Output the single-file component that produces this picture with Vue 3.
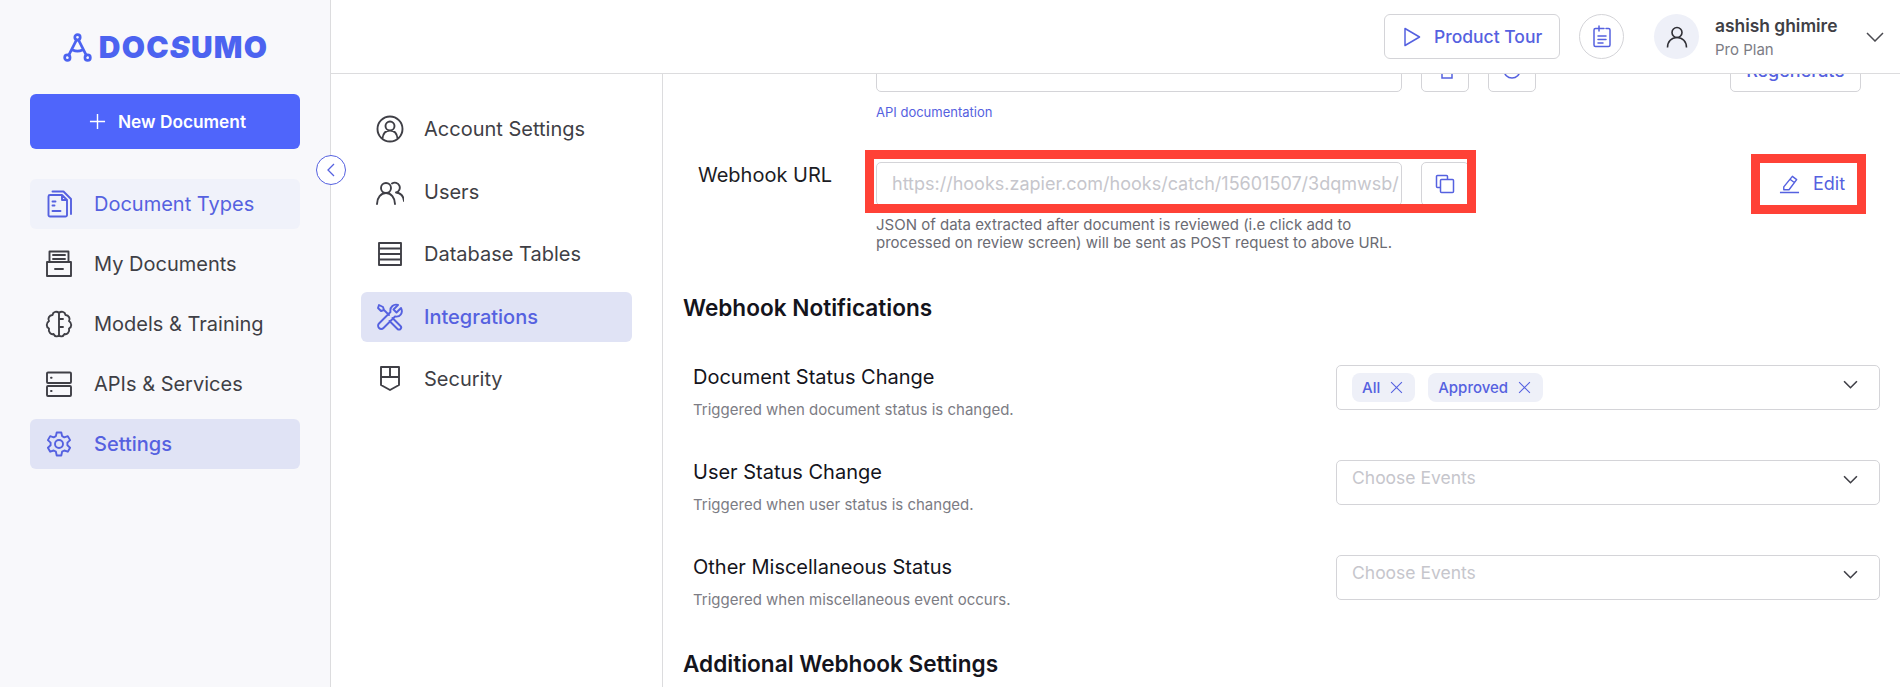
<script setup>
const mainNav = [
  { label: 'Document Types', icon: 'doc', state: 'soft' },
  { label: 'My Documents', icon: 'drawer' },
  { label: 'Models & Training', icon: 'brain' },
  { label: 'APIs & Services', icon: 'server' },
  { label: 'Settings', icon: 'gear', state: 'active' }
]
const subNav = [
  { label: 'Account Settings', icon: 'account' },
  { label: 'Users', icon: 'users' },
  { label: 'Database Tables', icon: 'table' },
  { label: 'Integrations', icon: 'tools', state: 'active' },
  { label: 'Security', icon: 'shield' }
]
const iconPaths = {
  doc: 'M5 5h12l5 5v15a1.500 1.500 0 0 1-1.500 1.500H5A1.500 1.500 0 0 1 3.500 25V6.500A1.500 1.500 0 0 1 5 5zM7.500 1.500h11l7.500 7.500v15M17 5v5h5M7.500 11.500h3M7.500 15.500h2M7.500 21h8',
  drawer: 'M4.500 12V1.500h19V12M2 12h24v14H2zM8 5h12M8 9h12M10 19h8',
  brain: 'M14 3C12 1 8 1.500 7.500 5 4 5 2.500 9 4 11c-3 2-3 6 0 7.500C3 22 6 25 8.500 24c1.500 3 4.500 3 5.500 1zM14 3c2-2 6-1.500 6.500 2 3.500 0 5 4 3.500 6 3 2 3 6 0 7.500 1 3.500-2 6.500-4.500 5.500-1.500 3-4.500 3-5.500 1M14 9h4M14 17h4',
  server: 'M3 2.500h22a1 1 0 0 1 1 1V12a1 1 0 0 1-1 1H3a1 1 0 0 1-1-1V3.500a1 1 0 0 1 1-1zM3 16h22a1 1 0 0 1 1 1v8a1 1 0 0 1-1 1H3a1 1 0 0 1-1-1v-8a1 1 0 0 1 1-1zM6 7.800h.6M6 21h.6',
  gear: 'M11.700 2.500h4.600l.8 3.600 2.200 1.200 3.500-1.200 2.300 4-2.700 2.500v2.600l2.700 2.500-2.300 4-3.500-1.200-2.200 1.200-.8 3.800h-4.600l-.8-3.800-2.200-1.200-3.500 1.200-2.300-4 2.700-2.500v-2.600l-2.700-2.500 2.300-4 3.500 1.200 2.200-1.200zM14 10a4 4 0 1 0 0 8 4 4 0 0 0 0-8z',
  account: 'M14 1.500a12.500 12.500 0 1 0 0 25 12.500 12.500 0 0 0 0-25zM14 6.500a4.500 4.500 0 1 0 0 9 4.500 4.500 0 0 0 0-9zM6.500 23.500c.5-5 3.500-8 7.500-8s7 3 7.500 8',
  users: 'M10 5a5 5 0 1 0 0 10 5 5 0 0 0 0-10zM1 26c0-6.500 4-11 9-11s9 4.500 9 11M16 5.500a5 5 0 1 1 4 9c4.500.5 7.500 4 8 8.500',
  table: 'M3 3h22v22H3zM3 8.500h22M3 14h22M3 19.500h22',
  tools: 'M25 5l-4.500 4.500-3-3L22 2c-4-1.500-8.500 2-7.500 7L3 20.500a3 3 0 0 0 4.500 4.500L19 13.500c5 1 8.500-3.500 6-8.500zM3 2L2 5l3 3 3-1-1-3zM8 7l5 5M16.500 15l8 8a2 2 0 0 1-3 3l-8-8',
  shield: 'M5 2h18v18l-9 5-9-5zM5 12h18M14 2v10'
}
</script>

<template>
  <div class="app">
    <aside class="sidebar">
      <div class="logo">
        <svg class="logo-mark" viewBox="0 0 30 30" fill="none" stroke="currentColor" stroke-width="2.800" stroke-linecap="round">
          <circle cx="15" cy="4.500" r="2.800" />
          <circle cx="4.500" cy="25.500" r="2.800" />
          <circle cx="25.500" cy="25.500" r="2.800" />
          <path d="M14 7.200L6 23M16 7.200L24 23M10 17.500c3 1.500 7 1.500 10 0" />
        </svg>
        <span class="logo-text">DOC<i>S</i>UMO</span>
      </div>
      <button class="new-doc">
        <svg viewBox="0 0 18 18" fill="none" stroke="currentColor" stroke-width="1.500"><path d="M9 1v16M1 9h16" /></svg>
        <span>New Document</span>
      </button>
      <nav class="main-nav">
        <a v-for="item in mainNav" :key="item.label" class="nav-item" :class="item.state">
          <svg viewBox="0 0 28 28" fill="none" stroke="currentColor" stroke-width="1.900" stroke-linejoin="round" stroke-linecap="round"><path :d="iconPaths[item.icon]" /></svg>
          <span>{{ item.label }}</span>
        </a>
      </nav>
      <button class="collapse">
        <svg viewBox="0 0 12 16" fill="none" stroke="currentColor" stroke-width="1.300"><path d="M9 2L3 8l6 6" /></svg>
      </button>
    </aside>

    <div class="main">
      <header class="topbar">
        <button class="tour">
          <svg viewBox="0 0 18 20" fill="none" stroke="currentColor" stroke-width="1.500" stroke-linejoin="round"><path d="M2 1.500L16.500 10 2 18.500z" /></svg>
          <span>Product Tour</span>
        </button>
        <button class="task">
          <svg viewBox="0 0 20 24" fill="none" stroke="currentColor" stroke-width="1.500" stroke-linecap="round"><path d="M6 3.500H3.500a1.500 1.500 0 0 0-1.500 1.500v15a1.500 1.500 0 0 0 1.500 1.500h13a1.500 1.500 0 0 0 1.500-1.500V5a1.500 1.500 0 0 0-1.500-1.500H14M8 3.500h4M7 1v5M6 11h8M6 14.500h8M6 18h5" /></svg>
        </button>
        <div class="avatar">
          <svg viewBox="0 0 24 24" fill="none" stroke="#2f2f35" stroke-width="1.600"><circle cx="12" cy="7.500" r="5" /><path d="M2.500 22.500c0-6 4-10 9.500-10s9.500 4 9.500 10" /></svg>
        </div>
        <div class="who">
          <strong>ashish ghimire</strong>
          <small>Pro Plan</small>
        </div>
        <svg class="chev-top" viewBox="0 0 18 10" fill="none" stroke="#4a4a50" stroke-width="1.500"><path d="M1 1l8 8 8-8" /></svg>
      </header>

      <div class="body">
        <nav class="sub-nav">
          <a v-for="item in subNav" :key="item.label" class="nav-item" :class="item.state">
            <svg viewBox="0 0 28 28" fill="none" stroke="currentColor" stroke-width="1.900" stroke-linejoin="round" stroke-linecap="round"><path :d="iconPaths[item.icon]" /></svg>
            <span>{{ item.label }}</span>
          </a>
        </nav>

        <section class="content">
          <div class="scroll">
            <div class="field">
              <div class="field-label"></div>
              <div class="field-main">
                <div class="control-row">
                  <div class="text-input"></div>
                  <button class="square"><svg viewBox="0 0 20 20" fill="none" stroke="currentColor" stroke-width="1.500"><path d="M5 12V3.500A1.500 1.500 0 0 1 6.500 2h6M7 6h10v12H7z" /></svg></button>
                  <button class="square"><svg viewBox="0 0 20 20" fill="none" stroke="currentColor" stroke-width="1.500"><circle cx="10" cy="10" r="8" /></svg></button>
                </div>
                <a class="doc-link">API documentation</a>
              </div>
              <button class="regen">Regenerate</button>
            </div>

            <div class="field webhook">
              <div class="field-label">Webhook URL</div>
              <div class="field-main">
                <div class="control-row">
                  <div class="text-input url">https://hooks.zapier.com/hooks/catch/15601507/3dqmwsb/</div>
                  <button class="square"><svg viewBox="0 0 20 20" fill="none" stroke="currentColor" stroke-width="1.500"><path d="M5.500 13.500H2.500a1 1 0 0 1-1-1V2.500a1 1 0 0 1 1-1h9a1 1 0 0 1 1 1v3" /><rect x="5.500" y="5.500" width="13" height="13" rx="1" /></svg></button>
                </div>
                <p class="help">JSON of data extracted after document is reviewed (i.e click add to<br />processed on review screen) will be sent as POST request to above URL.</p>
              </div>
              <button class="edit">
                <svg viewBox="0 0 22 22" fill="none" stroke="currentColor" stroke-width="1.500" stroke-linejoin="round"><path d="M5 14.500L14 3.500l4.500 3.500-8 10.500H5zM11.500 6.500l4.500 3.500M1 20.500h20" /></svg>
                <span>Edit</span>
              </button>
              <i class="mark mark-url"></i>
              <i class="mark mark-edit"></i>
            </div>

            <h2 class="section-title first">Webhook Notifications</h2>

            <div class="status-row">
              <div class="status-text">
                <h3>Document Status Change</h3>
                <p>Triggered when document status is changed.</p>
              </div>
              <div class="select">
                <span class="tag">All <svg viewBox="0 0 12 12" fill="none" stroke="currentColor" stroke-width="1"><path d="M1 1l10 10M11 1L1 11" /></svg></span>
                <span class="tag">Approved <svg viewBox="0 0 12 12" fill="none" stroke="currentColor" stroke-width="1"><path d="M1 1l10 10M11 1L1 11" /></svg></span>
                <svg class="chev" viewBox="0 0 14 8" fill="none" stroke="#3f3f46" stroke-width="1.500"><path d="M1 1l6 6 6-6" /></svg>
              </div>
            </div>
            <div class="status-row">
              <div class="status-text">
                <h3>User Status Change</h3>
                <p>Triggered when user status is changed.</p>
              </div>
              <div class="select">
                <span class="placeholder">Choose Events</span>
                <svg class="chev" viewBox="0 0 14 8" fill="none" stroke="#3f3f46" stroke-width="1.500"><path d="M1 1l6 6 6-6" /></svg>
              </div>
            </div>
            <div class="status-row">
              <div class="status-text">
                <h3>Other Miscellaneous Status</h3>
                <p>Triggered when miscellaneous event occurs.</p>
              </div>
              <div class="select">
                <span class="placeholder">Choose Events</span>
                <svg class="chev" viewBox="0 0 14 8" fill="none" stroke="#3f3f46" stroke-width="1.500"><path d="M1 1l6 6 6-6" /></svg>
              </div>
            </div>

            <h2 class="section-title second">Additional Webhook Settings</h2>
          </div>
        </section>
      </div>
    </div>
  </div>
</template>

<style>
html, body { margin: 0; background: #fff; overflow: hidden; }
</style>

<style scoped>
* { box-sizing: border-box; }
.app {
  display: flex;
  height: 687px;
  overflow: hidden;
  font-family: Inter, "Noto Sans", sans-serif;
  color: #3f3f46;
}
button { font-family: inherit; background: #fff; cursor: pointer; padding: 0; }

.sidebar {
  position: relative;
  flex: 0 0 331px;
  padding: 30px 30px 0;
  background: #f8f8fb;
  border-right: 1px solid #dcdcde;
}
.logo {
  display: flex;
  align-items: center;
  justify-content: center;
  gap: 7px;
  height: 34px;
  color: #4c63f0;
}
.logo-mark { width: 29px; height: 29px; }
.logo-text { font-size: 30px; font-weight: 900; letter-spacing: 1.200px; line-height: 1; margin-right: -1px; }
.logo-text i { font-style: italic; }
.new-doc {
  display: flex;
  align-items: center;
  justify-content: center;
  gap: 12px;
  width: 270px;
  height: 55px;
  margin-top: 30px;
  padding-left: 5px;
  border: 0;
  border-radius: 6px;
  background: #4f65fb;
  color: #fff;
  font-size: 17.300px;
  font-weight: 600;
}
.new-doc svg { width: 17px; height: 17px; }
.main-nav { display: flex; flex-direction: column; gap: 10px; margin-top: 30px; }
.nav-item {
  display: flex;
  align-items: center;
  height: 50px;
  padding-left: 15px;
  border-radius: 6px;
  font-size: 20px;
  color: #3f3f46;
}
.nav-item svg { flex: 0 0 28px; width: 28px; height: 28px; margin-right: 21px; }
.nav-item.soft { background: #f0f2fa; color: #5561e0; }
.nav-item.active { background: #e0e3f5; color: #5561e0; font-weight: 500; }
.collapse {
  position: absolute;
  top: 155px;
  right: -16px;
  z-index: 2;
  display: flex;
  align-items: center;
  justify-content: center;
  width: 30px;
  height: 30px;
  border: 1px solid #5561e0;
  border-radius: 50%;
  color: #5561e0;
}
.collapse svg { width: 12px; height: 16px; }

.main { flex: 1; min-width: 0; display: flex; flex-direction: column; }
.topbar {
  flex: 0 0 74px;
  display: flex;
  align-items: center;
  justify-content: flex-end;
  padding: 0 16px 0 0;
  background: #fff;
  border-bottom: 1px solid #dcdcde;
}
.tour {
  display: flex;
  align-items: center;
  gap: 13px;
  width: 176px;
  height: 45px;
  padding-left: 18px;
  border: 1px solid #d4d4d8;
  border-radius: 6px;
  color: #5561e0;
  font-size: 17.500px;
  font-weight: 500;
}
.tour svg { width: 18px; height: 20px; }
.task {
  display: flex;
  align-items: center;
  justify-content: center;
  width: 45px;
  height: 45px;
  margin-left: 19px;
  border: 1px solid #d4d4d8;
  border-radius: 50%;
  color: #5561e0;
}
.task svg { width: 20px; height: 24px; }
.avatar {
  display: flex;
  align-items: center;
  justify-content: center;
  width: 45px;
  height: 45px;
  margin-left: 30px;
  border-radius: 50%;
  background: #eef0f8;
}
.avatar svg { width: 24px; height: 24px; }
.who { display: flex; flex-direction: column; width: 151px; margin-left: 16px; }
.who strong { font-size: 17.400px; font-weight: 600; line-height: 22px; color: #3f3f46; }
.who small { margin-top: 4px; font-size: 15px; line-height: 18px; color: #7c7c84; }
.chev-top { width: 18px; height: 10px; }

.body { flex: 1; min-height: 0; display: flex; }
.sub-nav {
  flex: 0 0 332px;
  display: flex;
  flex-direction: column;
  gap: 12.500px;
  padding: 30px 30px 0;
  border-right: 1px solid #dcdcde;
}
.sub-nav .nav-item svg { margin-right: 20px; }

.content { flex: 1; min-width: 0; overflow: hidden; }
.scroll { margin-top: -26px; }
.field {
  position: relative;
  display: flex;
  align-items: flex-start;
  padding: 0 20px 0 35px;
}
.field-label { flex: 0 0 178px; padding-top: 0; font-size: 20px; line-height: 26px; color: #1c1c24; }
.field-main { flex: 1; min-width: 0; }
.control-row { display: flex; gap: 19px; }
.text-input {
  width: 526px;
  height: 44px;
  padding: 0 15px;
  border: 1px solid #d4d4d8;
  border-radius: 5px;
  background: #fff;
}
.url {
  overflow: hidden;
  white-space: nowrap;
  font-size: 18px;
  line-height: 42px;
  color: #c6c6cc;
}
.square {
  display: flex;
  align-items: center;
  justify-content: center;
  width: 48px;
  height: 44px;
  border: 1px solid #d4d4d8;
  border-radius: 5px;
  color: #5561e0;
}
.square svg { width: 20px; height: 20px; }
.doc-link { display: block; margin-top: 12px; font-size: 13px; line-height: 16px; color: #5561e0; }
.regen {
  width: 131px;
  height: 44px;
  margin-right: 19px;
  border: 1px solid #d4d4d8;
  border-radius: 5px;
  color: #5561e0;
  font-size: 18px;
  font-weight: 500;
}
.webhook { margin-top: 42px; }
.help { margin: 10px 0 0; font-size: 15px; line-height: 18px; color: #6b6b73; }
.edit {
  display: flex;
  align-items: center;
  gap: 13px;
  width: 94px;
  height: 40px;
  margin: 1px 25px 0 0;
  padding-left: 18px;
  border: 0;
  color: #5561e0;
  font-size: 18px;
}
.edit svg { width: 21px; height: 21px; }
.mark { position: absolute; display: block; border: 9.500px solid #ff4136; pointer-events: none; }
.mark-url { left: 202px; top: -12px; width: 611px; height: 63px; }
.mark-edit { left: 1088px; top: -8px; width: 115px; height: 60px; }

.section-title { margin: 0; padding-left: 20px; font-size: 22.600px; font-weight: 600; line-height: 30px; color: #14141c; }
.section-title.first { margin-top: 41px; }
.section-title.second { margin-top: 49px; }
.status-row { display: flex; height: 45px; margin-top: 0; padding: 0 20px 0 30px; }
.section-title.first + .status-row { margin-top: 42px; }
.status-row + .status-row { margin-top: 50px; }
.status-text { flex: 1; }
.status-text h3 { margin: 0; font-size: 20px; font-weight: 400; line-height: 24px; color: #14141c; }
.status-text p { margin: 11px 0 0; font-size: 15px; line-height: 20px; white-space: nowrap; color: #7c7c84; }
.select {
  position: relative;
  display: flex;
  align-items: flex-start;
  gap: 13px;
  flex: 0 0 544px;
  height: 45px;
  padding: 7px 15px 0;
  border: 1px solid #d4d4d8;
  border-radius: 5px;
}
.tag {
  display: flex;
  align-items: center;
  gap: 10px;
  height: 29px;
  padding: 0 12px 0 10px;
  border-radius: 8px;
  background: #eef0f8;
  color: #5561e0;
  font-size: 15px;
  font-weight: 500;
}
.tag svg { width: 13px; height: 13px; }
.placeholder { font-size: 17.500px; line-height: 20px; color: #c6c6cc; }
.chev { position: absolute; right: 21px; top: 14px; width: 15px; height: 9px; }
</style>
